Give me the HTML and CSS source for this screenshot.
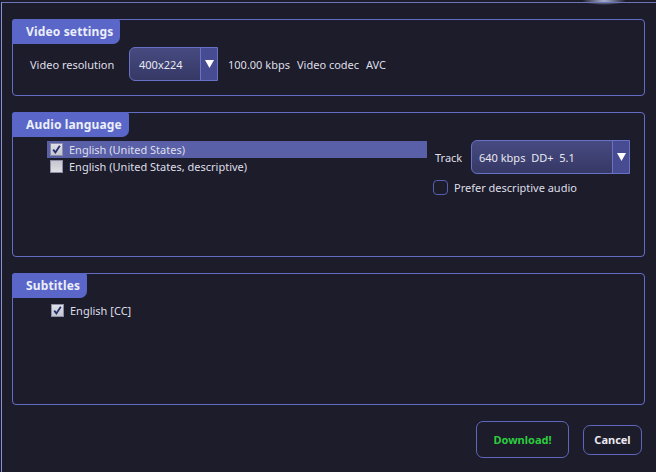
FILE: index.html
```html
<!DOCTYPE html>
<html>
<head>
<meta charset="utf-8">
<link rel="stylesheet" href="styles.css">
</head>
<body>
<div class="window">
  <section class="group g-video">
    <div class="tab">Video settings</div>
    <div class="video-row">
      <span class="lbl-res">Video resolution</span>
      <div class="combo combo-res">
        <span class="combo-text">400x224</span>
        <span class="combo-arrow"><svg width="9" height="8" viewBox="0 0 9 8"><polygon points="0,0 9,0 4.5,8" fill="#ffffff"/></svg></span>
      </div>
      <span class="info bitrate">100.00 kbps</span>
      <span class="info codec-lbl">Video codec</span>
      <span class="info codec">AVC</span>
    </div>
  </section>

  <section class="group g-audio">
    <div class="tab">Audio language</div>
    <div class="audio-body">
      <ul class="list">
        <li class="item selected"><span class="cb checked"><svg width="11" height="11" viewBox="0 0 11 11"><path d="M2.2 5.6 L4.4 8.4 L8.8 1.8" stroke="#26306a" stroke-width="1.8" fill="none"/></svg></span><span>English (United States)</span></li>
        <li class="item"><span class="cb"></span><span>English (United States, descriptive)</span></li>
      </ul>
      <div class="audio-side">
        <div class="track-row">
          <span class="lbl-track">Track</span>
          <div class="combo combo-track">
            <span class="combo-text">640 kbps&nbsp; DD+&nbsp; 5.1</span>
            <span class="combo-arrow"><svg width="9" height="8" viewBox="0 0 9 8"><polygon points="0,0 9,0 4.5,8" fill="#ffffff"/></svg></span>
          </div>
        </div>
        <label class="prefer-row"><span class="rcb"></span><span>Prefer descriptive audio</span></label>
      </div>
    </div>
  </section>

  <section class="group g-subs">
    <div class="tab">Subtitles</div>
    <ul class="list subs-list">
      <li class="item"><span class="cb checked"><svg width="11" height="11" viewBox="0 0 11 11"><path d="M2.2 5.6 L4.4 8.4 L8.8 1.8" stroke="#26306a" stroke-width="1.8" fill="none"/></svg></span><span>English [CC]</span></li>
    </ul>
  </section>

  <div class="buttons">
    <button class="btn btn-download">Download!</button>
    <button class="btn btn-cancel">Cancel</button>
  </div>
</div>
</body>
</html>
```

FILE: styles.css
```css
html, body {
  margin: 0;
  padding: 0;
}
body {
  width: 656px;
  height: 472px;
  overflow: hidden;
  background:
    radial-gradient(ellipse 22px 4px at 604px 1px, rgba(200,215,255,0.85), rgba(200,215,255,0) 100%),
    #1d1c2b;
  font-family: "Noto Sans", "DejaVu Sans", sans-serif;
  font-size: 11px;
  color: #dfdfe8;
}
.window {
  margin: 2px 0 0 1px;
  height: 470px;
  box-sizing: border-box;
  border-left: 1px solid #8a92d6;
  border-top: 1px solid #6d74b8;
  padding: 16px 0 0 10px;
}
.group {
  width: 633px;
  box-sizing: border-box;
  border: 1px solid #646dc4;
  border-radius: 4px;
}
.g-video { height: 77px; }
.g-audio { height: 145px; margin-top: 16px; }
.g-subs { height: 132px; margin-top: 16px; }

.tab {
  display: inline-block;
  margin: -1px 0 0 -1px;
  height: 25px;
  box-sizing: border-box;
  padding: 1px 7px 0 14px;
  line-height: 24px;
  background: #5a67c9;
  color: #eceefa;
  font-family: "Noto Sans", "DejaVu Sans", sans-serif;
  font-weight: bold;
  font-size: 12px;
  letter-spacing: 0.15px;
  border-radius: 3px 3px 7px 0;
  vertical-align: top;
}

.video-row {
  display: flex;
  align-items: center;
  margin-top: 3px;
  padding-left: 17px;
}
.lbl-res { width: 99px; }
.bitrate { width: 69px; margin-left: 10px; }
.codec-lbl { width: 69px; }

.combo {
  display: flex;
  height: 34px;
  box-sizing: border-box;
  border: 1px solid #6870c8;
  border-radius: 6px 0 0 6px;
  background: linear-gradient(#464a80, #363965);
  overflow: hidden;
}
.combo-res { width: 89px; }
.combo-track { width: 159px; margin-left: auto; }
.combo-text {
  flex: 1;
  display: flex;
  align-items: center;
  padding-left: 9px;
  color: #e8e8f0;
  white-space: nowrap;
}
.combo-track .combo-text { padding-left: 7px; }
.combo-arrow {
  width: 16px;
  display: flex;
  align-items: center;
  justify-content: center;
  border-left: 1px solid #6a72c8;
  background: #474c92;
}

.list {
  list-style: none;
  margin: 0;
  padding: 0;
}
.item {
  display: flex;
  align-items: center;
  height: 17px;
  padding-left: 3px;
  white-space: nowrap;
}
.item.selected { background: #5960a8; }
.cb {
  width: 13px;
  height: 13px;
  box-sizing: border-box;
  margin-right: 6px;
  border: 1px solid #8b8ea4;
  background: linear-gradient(#c6c6ce, #dedee4);
  display: flex;
  align-items: center;
  justify-content: center;
}
.cb.checked { background: linear-gradient(#e0e0e8, #c4c6d2); }

.audio-body {
  display: flex;
  padding: 3px 14px 0 34px;
}
.audio-body .list {
  width: 380px;
  margin-top: 1px;
}
.audio-side {
  flex: 1;
  margin-left: 6px;
}
.track-row {
  display: flex;
  align-items: center;
}
.lbl-track { margin-left: 2px; }
.prefer-row {
  display: flex;
  align-items: center;
  margin-top: 6px;
}
.rcb {
  width: 15px;
  height: 15px;
  box-sizing: border-box;
  border: 1px solid #565fb0;
  border-radius: 4px;
  margin-right: 6px;
}

.subs-list {
  margin-top: 4px;
  padding-left: 35px;
}

.buttons {
  width: 633px;
  display: flex;
  justify-content: flex-end;
  align-items: center;
  gap: 14px;
  margin-top: 16px;
  padding-right: 3px;
  box-sizing: border-box;
}
.btn {
  background: #1d1c2b;
  border: 1px solid #5f67bd;
  border-radius: 7px;
  font-family: "Noto Sans", "DejaVu Sans", sans-serif;
  font-weight: bold;
  font-size: 11px;
  padding: 0;
}
.btn-download {
  width: 93px;
  height: 37px;
  color: #2ccc3e;
}
.btn-cancel {
  width: 59px;
  height: 30px;
  color: #eceaf0;
}
```
